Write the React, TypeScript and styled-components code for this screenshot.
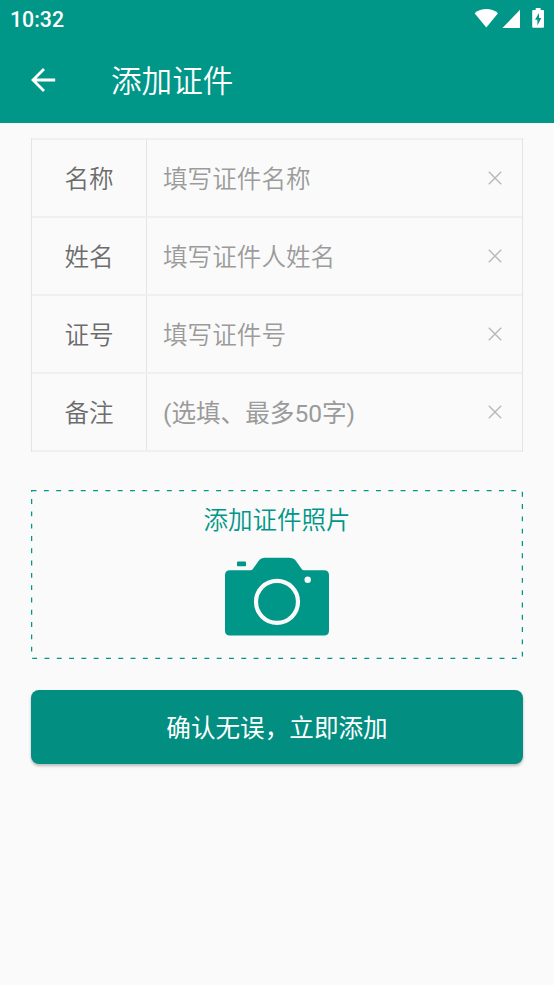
import React from "react";
import styled, { createGlobalStyle } from "styled-components";

const TEAL = "#009688";

const GlobalStyle = createGlobalStyle`
  * { box-sizing: border-box; }
  body {
    margin: 0;
    background: #fafafa;
    font-family: Roboto, "Noto Sans CJK SC", sans-serif;
  }
`;

const Screen = styled.div`
  display: flex;
  flex-direction: column;
  width: 554px;
  height: 985px;
  overflow: hidden;
  background: #fafafa;
`;

const StatusBar = styled.div`
  display: flex;
  align-items: flex-start;
  height: 37px;
  padding: 0 10px;
  background: ${TEAL};
  color: #fff;
`;

const Clock = styled.span`
  flex: 1;
  padding-top: 2px;
  font-size: 21.3px;
  font-weight: 500;
  line-height: 36px;
`;

const StatusIcons = styled.svg`
  display: block;
  width: 70px;
  height: 24px;
  margin-top: 7px;
`;

const AppBar = styled.header`
  display: flex;
  align-items: center;
  height: 86px;
  padding-left: 31px;
  background: ${TEAL};
  color: #fff;
`;

const BackButton = styled.button`
  display: block;
  width: 26px;
  height: 26px;
  padding: 0;
  border: 0;
  background: none;
  color: inherit;

  svg { display: block; }
`;

const Title = styled.h1`
  margin: 0 0 0 54px;
  padding-top: 4px;
  font-size: 30.6px;
  font-weight: 350;
  line-height: 40px;
`;

const Content = styled.main`
  display: flex;
  flex-direction: column;
  padding: 15px 31px 0;
`;

const Form = styled.div`
  border: solid #e4e4e4;
  border-width: 0 1px;
`;

const Field = styled.label`
  display: grid;
  grid-template-columns: 115px 1fr 54px;
  height: 78px;
  border-top: 2px solid #f0f0f0;

  &:last-child {
    height: 80px;
    border-bottom: 2px solid #f0f0f0;
  }
`;

const FieldName = styled.span`
  display: flex;
  align-items: center;
  justify-content: center;
  padding-bottom: 2px;
  border-right: 1px solid #e4e4e4;
  color: #6c6c6c;
  font-size: 24.6px;
  font-weight: 350;
`;

const FieldInput = styled.input<{ $weight: number }>`
  min-width: 0;
  padding: 2px 0 0 16px;
  border: 0;
  outline: 0;
  background: none;
  color: #6c6c6c;
  font: ${(p) => p.$weight} 24.6px Roboto, "Noto Sans CJK SC", sans-serif;

  &::placeholder { color: #9b9b9b; opacity: 1; }
`;

const ClearButton = styled.button`
  display: flex;
  align-items: center;
  justify-content: center;
  padding: 0;
  border: 0;
  background: none;
`;

const PhotoPicker = styled.div`
  position: relative;
  display: flex;
  flex-direction: column;
  align-items: center;
  height: 169px;
  margin-top: 38px;
  padding-top: 13px;
  color: ${TEAL};
`;

const DashedOutline = styled.svg`
  position: absolute;
  inset: 0;
  width: 492px;
  height: 169px;
`;

const PhotoLabel = styled.span`
  font-size: 24.5px;
  font-weight: 350;
  line-height: 36px;
`;

const CameraIcon = styled.svg`
  display: block;
  width: 106px;
  height: 80px;
  margin-top: 18px;
`;

const SubmitButton = styled.button`
  height: 74px;
  margin-top: 31px;
  padding: 0 0 2px;
  border: 0;
  border-radius: 8px;
  background: #028e80;
  box-shadow: 0 2px 3px rgba(0, 0, 0, 0.26);
  color: #fff;
  font: 400 24.6px Roboto, "Noto Sans CJK SC", sans-serif;
`;

const fields = [
  { name: "名称", hint: "填写证件名称", weight: 350 },
  { name: "姓名", hint: "填写证件人姓名", weight: 350 },
  { name: "证号", hint: "填写证件号", weight: 350 },
  { name: "备注", hint: "(选填、最多50字)", weight: 400 },
];

export default function App() {
  return (
    <Screen>
      <GlobalStyle />
      <StatusBar>
        <Clock>10:32</Clock>
        <StatusIcons viewBox="0 0 70 24" fill="#fff">
          <path d="M0.6 6.2C7.3 0.6 17.3 0.6 24 6.2L12.3 20.4Z" />
          <path d="M46 2.8V21H28.4Z" />
          <path
            fillRule="evenodd"
            d="M61.7 1H66.6V3H69Q70 3 70 4V19.7Q70 20.7 69 20.7H59.2Q58.2 20.7 58.2 19.7V4Q58.2 3 59.2 3H61.7ZM65 6L61 12.8H63.4V18.4L67.3 11H65Z"
          />
        </StatusIcons>
      </StatusBar>
      <AppBar>
        <BackButton aria-label="返回">
          <svg width="26" height="26" viewBox="0 0 26 26" fill="none" stroke="#fff" strokeWidth="2.8">
            <path d="M24.2 13H2.2M13 1.9L2 13L13 24.1" />
          </svg>
        </BackButton>
        <Title>添加证件</Title>
      </AppBar>
      <Content>
        <Form>
          {fields.map((f) => (
            <Field key={f.name}>
              <FieldName>{f.name}</FieldName>
              <FieldInput placeholder={f.hint} $weight={f.weight} />
              <ClearButton aria-label="清除">
                <svg width="14" height="14" viewBox="0 0 14 14" stroke="#b8b8b8" strokeWidth="1.4">
                  <path d="M0.8 0.8L13.2 13.2M13.2 0.8L0.8 13.2" />
                </svg>
              </ClearButton>
            </Field>
          ))}
        </Form>
        <PhotoPicker>
          <DashedOutline viewBox="0 0 492 169" fill="none">
            <rect
              x="0.6"
              y="0.6"
              width="490.8"
              height="167.8"
              stroke={TEAL}
              strokeWidth="1.3"
              strokeDasharray="4.9 7.4"
            />
          </DashedOutline>
          <PhotoLabel>添加证件照片</PhotoLabel>
          <CameraIcon viewBox="0 0 106 80" fill={TEAL}>
            <rect x="13" y="4.6" width="9" height="4.6" rx="0.8" />
            <path d="M6 13.3H26.5Q28 13.3 29 11.8L34.5 4Q37 0.8 41 0.8H65Q69.5 0.8 72 4L77.5 11.8Q78.5 13.3 80 13.3H100Q105 13.3 105 18.3V73.5Q105 78.5 100 78.5H6Q1 78.5 1 73.5V18.3Q1 13.3 6 13.3Z" />
            <circle cx="53" cy="44.8" r="21" fill="none" stroke="#fafafa" strokeWidth="4.2" />
            <circle cx="83.7" cy="22.7" r="3.2" fill="#fafafa" />
          </CameraIcon>
        </PhotoPicker>
        <SubmitButton>确认无误，立即添加</SubmitButton>
      </Content>
    </Screen>
  );
}
